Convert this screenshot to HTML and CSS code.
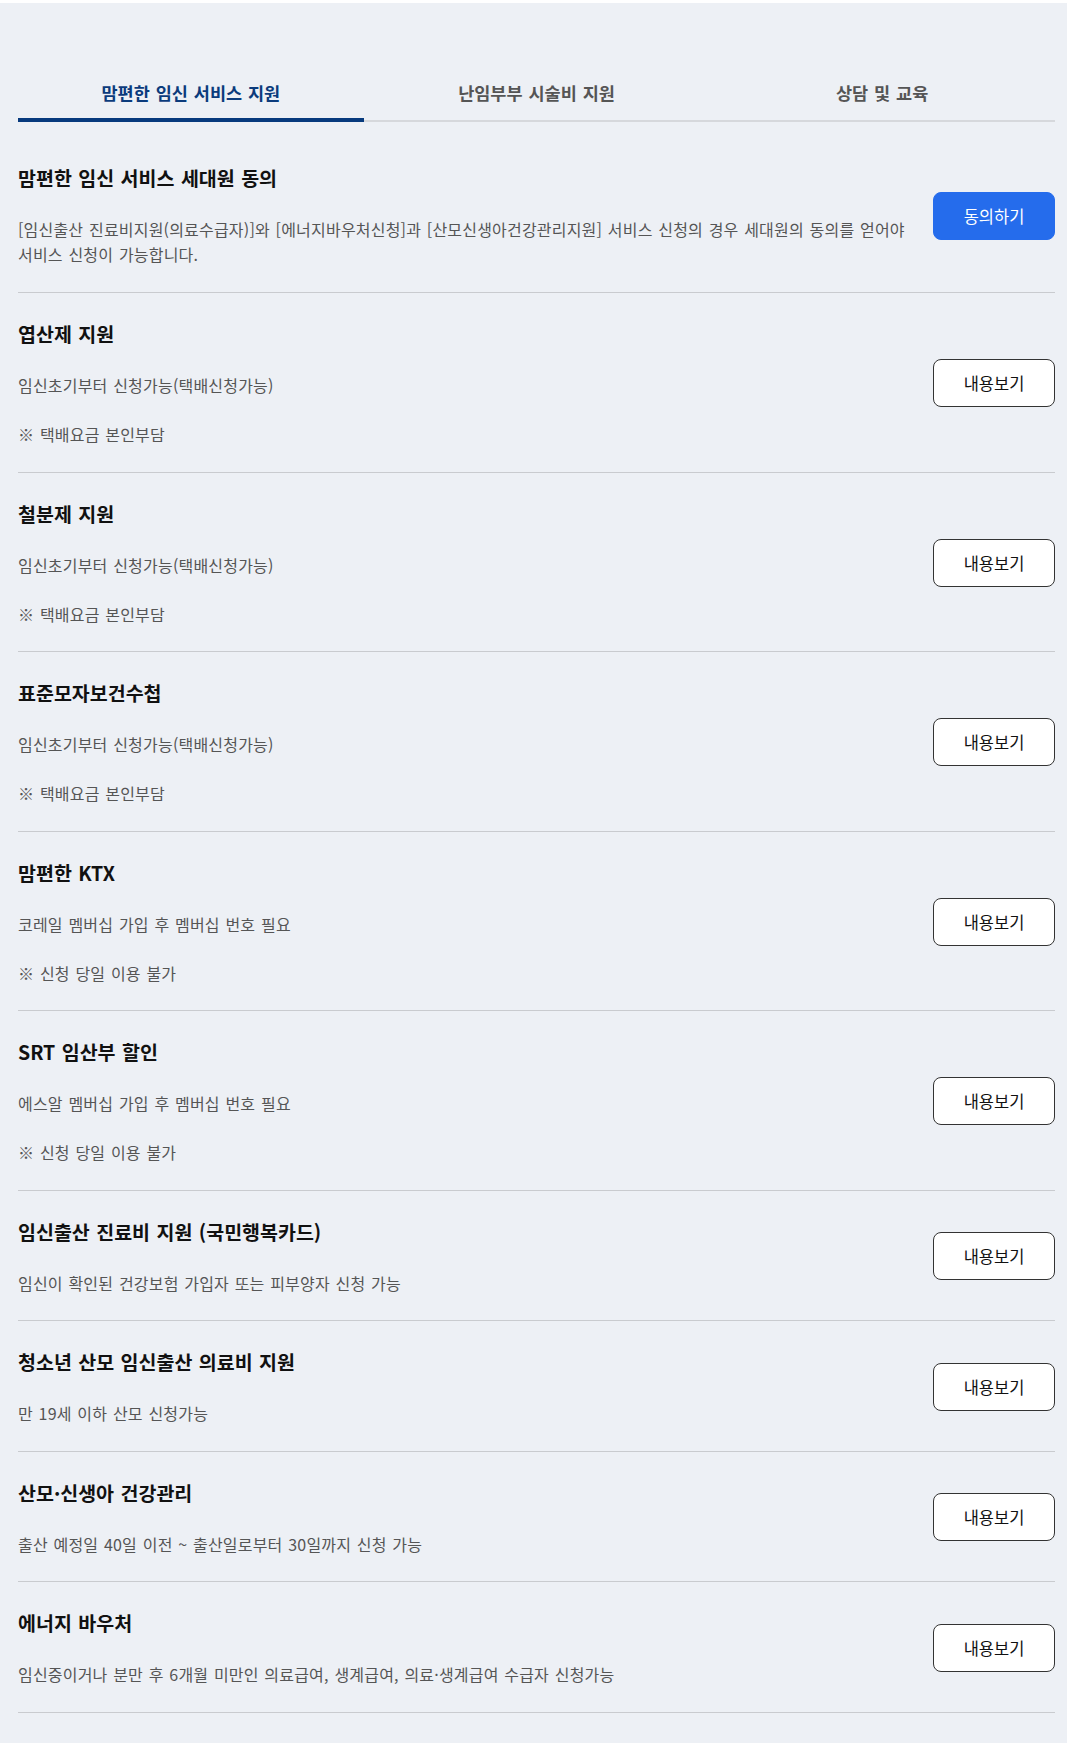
FILE: index.html
```html
<!DOCTYPE html>
<html lang="ko">
<head>
  <meta charset="UTF-8">
  <meta name="viewport" content="width=device-width, initial-scale=1.0">
  <title>임신 서비스 지원</title>
  <link rel="stylesheet" href="styles.css">
</head>
<body>
  <div class="page">
    <ul class="tabs">
      <li class="tab active">맘편한 임신 서비스 지원</li>
      <li class="tab">난임부부 시술비 지원</li>
      <li class="tab">상담 및 교육</li>
    </ul>

    <div class="service-list">
      <div class="service-item first">
        <div class="service-info">
          <h2 class="service-title">맘편한 임신 서비스 세대원 동의</h2>
          <p class="service-desc long">[임신출산 진료비지원(의료수급자)]와 [에너지바우처신청]과 [산모신생아건강관리지원] 서비스 신청의 경우 세대원의 동의를 얻어야 서비스 신청이 가능합니다.</p>
        </div>
        <button class="btn btn-primary">동의하기</button>
      </div>

      <div class="service-item">
        <div class="service-info">
          <h2 class="service-title">엽산제 지원</h2>
          <p class="service-desc">임신초기부터 신청가능(택배신청가능)</p>
          <p class="service-desc">※ 택배요금 본인부담</p>
        </div>
        <button class="btn">내용보기</button>
      </div>

      <div class="service-item">
        <div class="service-info">
          <h2 class="service-title">철분제 지원</h2>
          <p class="service-desc">임신초기부터 신청가능(택배신청가능)</p>
          <p class="service-desc">※ 택배요금 본인부담</p>
        </div>
        <button class="btn">내용보기</button>
      </div>

      <div class="service-item">
        <div class="service-info">
          <h2 class="service-title">표준모자보건수첩</h2>
          <p class="service-desc">임신초기부터 신청가능(택배신청가능)</p>
          <p class="service-desc">※ 택배요금 본인부담</p>
        </div>
        <button class="btn">내용보기</button>
      </div>

      <div class="service-item">
        <div class="service-info">
          <h2 class="service-title">맘편한 KTX</h2>
          <p class="service-desc">코레일 멤버십 가입 후 멤버십 번호 필요</p>
          <p class="service-desc">※ 신청 당일 이용 불가</p>
        </div>
        <button class="btn">내용보기</button>
      </div>

      <div class="service-item">
        <div class="service-info">
          <h2 class="service-title">SRT 임산부 할인</h2>
          <p class="service-desc">에스알 멤버십 가입 후 멤버십 번호 필요</p>
          <p class="service-desc">※ 신청 당일 이용 불가</p>
        </div>
        <button class="btn">내용보기</button>
      </div>

      <div class="service-item">
        <div class="service-info">
          <h2 class="service-title">임신출산 진료비 지원 (국민행복카드)</h2>
          <p class="service-desc">임신이 확인된 건강보험 가입자 또는 피부양자 신청 가능</p>
        </div>
        <button class="btn">내용보기</button>
      </div>

      <div class="service-item">
        <div class="service-info">
          <h2 class="service-title">청소년 산모 임신출산 의료비 지원</h2>
          <p class="service-desc">만 19세 이하 산모 신청가능</p>
        </div>
        <button class="btn">내용보기</button>
      </div>

      <div class="service-item">
        <div class="service-info">
          <h2 class="service-title">산모·신생아 건강관리</h2>
          <p class="service-desc">출산 예정일 40일 이전 ~ 출산일로부터 30일까지 신청 가능</p>
        </div>
        <button class="btn">내용보기</button>
      </div>

      <div class="service-item">
        <div class="service-info">
          <h2 class="service-title">에너지 바우처</h2>
          <p class="service-desc">임신중이거나 분만 후 6개월 미만인 의료급여, 생계급여, 의료·생계급여 수급자 신청가능</p>
        </div>
        <button class="btn">내용보기</button>
      </div>
    </div>
  </div>
</body>
</html>
```

FILE: styles.css
```css
html {
  background-color: #edf0f5;
}

body {
  margin: 0;
  border-top: 3px solid #ffffff;
  font-family: 'Noto Sans CJK KR', 'Noto Sans', sans-serif;
  color: #111111;
}

.page {
  padding: 0 12px 0 18px;
}

/* 탭 */
.tabs {
  display: flex;
  list-style: none;
  margin: 78px 0 0;
  padding: 0;
  border-bottom: 2px solid #d6d8dc;
}

.tab {
  flex: 1;
  text-align: center;
  font-size: 17.5px;
  font-weight: 700;
  line-height: 24px;
  word-spacing: 1px;
  color: #555555;
  padding-bottom: 13px;
  margin-bottom: -2px;
  border-bottom: 4px solid transparent;
  cursor: pointer;
}

.tab.active {
  color: #0b3b7c;
  border-bottom-color: #073a7d;
}

/* 서비스 목록 */
.service-item {
  display: flex;
  align-items: center;
  gap: 20px;
  padding: 27px 0 25.5px;
  border-bottom: 1px solid #c9cbcf;
}

.service-item.first {
  padding: 42px 0 25px;
}

.service-info {
  flex: 1;
  display: flex;
  flex-direction: column;
  gap: 25px;
}

.service-title {
  margin: 0;
  font-size: 19.5px;
  font-weight: 700;
  line-height: 28px;
  word-spacing: 1px;
  color: #111111;
}

.service-desc {
  margin: 0;
  font-size: 16px;
  line-height: 24px;
  letter-spacing: 0.2px;
  word-spacing: 1px;
  color: #555555;
}

.service-desc.long {
  line-height: 25px;
}

.btn {
  flex: none;
  width: 122px;
  height: 48px;
  border: 1px solid #333333;
  border-radius: 8px;
  background-color: #ffffff;
  font-family: inherit;
  font-size: 16.5px;
  color: #111111;
  cursor: pointer;
}

.btn-primary {
  border-color: #256cec;
  background-color: #256cec;
  color: #ffffff;
}
```
